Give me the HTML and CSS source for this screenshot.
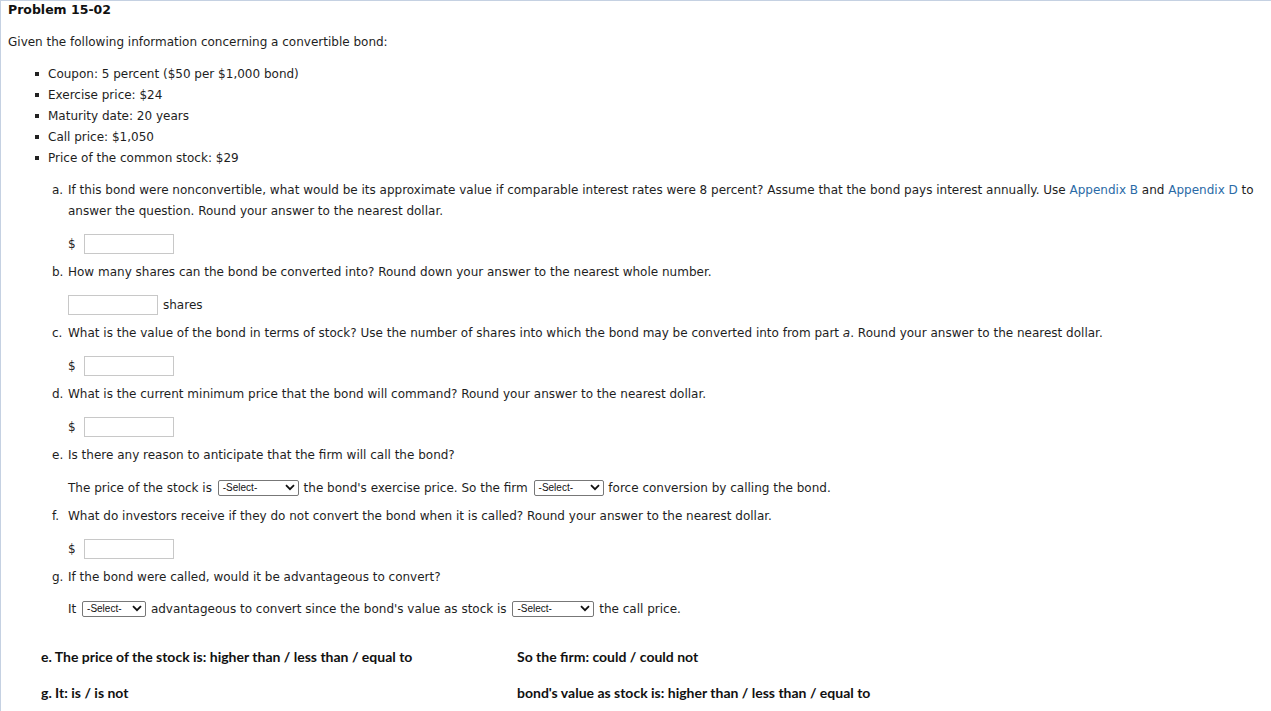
FILE: index.html
```html
<!DOCTYPE html>
<html>
<head>
<meta charset="utf-8">
<link rel="stylesheet" href="styles.css">
</head>
<body>
<div class="page">
  <div class="title">Problem 15-02</div>
  <p class="intro">Given the following information concerning a convertible bond:</p>
  <ul class="facts">
    <li>Coupon: 5 percent ($50 per $1,000 bond)</li>
    <li>Exercise price: $24</li>
    <li>Maturity date: 20 years</li>
    <li>Call price: $1,050</li>
    <li>Price of the common stock: $29</li>
  </ul>

  <div class="q qa">
    <span class="lbl">a.</span>
    <div class="qt">If this bond were nonconvertible, what would be its approximate value if comparable interest rates were 8 percent? Assume that the bond pays interest annually. Use <span class="link">Appendix B</span> and <span class="link">Appendix D</span> to answer the question. Round your answer to the nearest dollar.</div>
  </div>
  <div class="ans"><span class="cur">$</span><span class="box"></span></div>

  <div class="q">
    <span class="lbl">b.</span>
    <div class="qt">How many shares can the bond be converted into? Round down your answer to the nearest whole number.</div>
  </div>
  <div class="ans"><span class="box"></span><span class="unit">shares</span></div>

  <div class="q">
    <span class="lbl">c.</span>
    <div class="qt">What is the value of the bond in terms of stock? Use the number of shares into which the bond may be converted into from part <i>a</i>. Round your answer to the nearest dollar.</div>
  </div>
  <div class="ans"><span class="cur">$</span><span class="box"></span></div>

  <div class="q">
    <span class="lbl">d.</span>
    <div class="qt">What is the current minimum price that the bond will command? Round your answer to the nearest dollar.</div>
  </div>
  <div class="ans"><span class="cur">$</span><span class="box"></span></div>

  <div class="q">
    <span class="lbl">e.</span>
    <div class="qt">Is there any reason to anticipate that the firm will call the bond?</div>
  </div>
  <div class="sent">The price of the stock is <span class="sel w81"><span>-Select-</span><svg width="10" height="7" viewBox="0 0 10 7"><path d="M1 1.2 L5 5.2 L9 1.2" fill="none" stroke="#111" stroke-width="1.8"/></svg></span> the bond's exercise price. So the firm <span class="sel w70"><span>-Select-</span><svg width="10" height="7" viewBox="0 0 10 7"><path d="M1 1.2 L5 5.2 L9 1.2" fill="none" stroke="#111" stroke-width="1.8"/></svg></span> force conversion by calling the bond.</div>

  <div class="q qf">
    <span class="lbl">f.</span>
    <div class="qt">What do investors receive if they do not convert the bond when it is called? Round your answer to the nearest dollar.</div>
  </div>
  <div class="ans"><span class="cur">$</span><span class="box"></span></div>

  <div class="q">
    <span class="lbl">g.</span>
    <div class="qt">If the bond were called, would it be advantageous to convert?</div>
  </div>
  <div class="sent sg">It <span class="sel w64"><span>-Select-</span><svg width="10" height="7" viewBox="0 0 10 7"><path d="M1 1.2 L5 5.2 L9 1.2" fill="none" stroke="#111" stroke-width="1.8"/></svg></span> advantageous to convert since the bond's value as stock is <span class="sel w82"><span>-Select-</span><svg width="10" height="7" viewBox="0 0 10 7"><path d="M1 1.2 L5 5.2 L9 1.2" fill="none" stroke="#111" stroke-width="1.8"/></svg></span> the call price.</div>

  <div class="notes">
    <div>e. The price of the stock is: higher than / less than / equal to</div>
    <div>So the firm: could / could not</div>
    <div>g. It: is / is not</div>
    <div>bond's value as stock is: higher than / less than / equal to</div>
  </div>
</div>
</body>
</html>
```

FILE: styles.css
```css
html, body {
  margin: 0;
  padding: 0;
  background: #fff;
}
.page {
  box-sizing: border-box;
  min-height: 711px;
  border-top: 1px solid #c5d1e2;
  border-left: 1px solid #c5d1e2;
  padding: 0 0 0 7px;
  font-family: "DejaVu Sans", Verdana, sans-serif;
  font-size: 12px;
  color: #1e1e1e;
  line-height: 21px;
}
.title {
  font-weight: bold;
  font-size: 12.5px;
  line-height: 17px;
  color: #111;
}
.intro {
  margin: 14px 0 0 0;
}
.facts {
  margin: 11px 0 0 0;
  padding: 0 0 0 40px;
  list-style: none;
}
.facts li::before {
  content: "";
  display: inline-block;
  width: 4px;
  height: 4px;
  background: #222;
  margin: 0 9px 0 -13px;
  vertical-align: 2px;
}
.q {
  display: flex;
  margin: 8px 0 0 44px;
}
.qa {
  margin-top: 11px;
}
.lbl {
  width: 16px;
  flex: none;
}
.qt {
  flex: 1;
  padding-right: 4px;
}
.link {
  color: #2a6aa6;
}
.ans {
  display: flex;
  align-items: center;
  margin: 12px 0 0 60px;
  height: 20px;
}
.cur {
  width: 16px;
}
.box {
  box-sizing: border-box;
  width: 90px;
  height: 20px;
  border: 1px solid #c8c8c8;
  background: #fff;
}
.unit {
  margin-left: 5px;
}
.sent {
  margin: 12px 0 0 60px;
}
.sg {
  margin-top: 11px;
}
.sel {
  box-sizing: border-box;
  display: inline-flex;
  align-items: center;
  justify-content: space-between;
  vertical-align: middle;
  height: 16px;
  margin: -2px 1px 0 2px;
  border: 1px solid #777;
  border-radius: 2px;
  padding: 0 3px 0 4px;
  font-family: "Liberation Sans", Arial, sans-serif;
  font-size: 10px;
  line-height: 14px;
  color: #111;
}
.w81 { width: 81px; }
.w70 { width: 70px; }
.w64 { width: 64px; }
.w82 { width: 82px; }
.qf {
  margin-top: 7px;
}
.notes {
  display: grid;
  grid-template-columns: 476px 1fr;
  row-gap: 15px;
  margin: 26px 0 0 33px;
  font-family: Lato, "Open Sans", sans-serif;
  font-weight: bold;
  font-size: 14px;
  line-height: 21px;
  color: #111;
}
```
